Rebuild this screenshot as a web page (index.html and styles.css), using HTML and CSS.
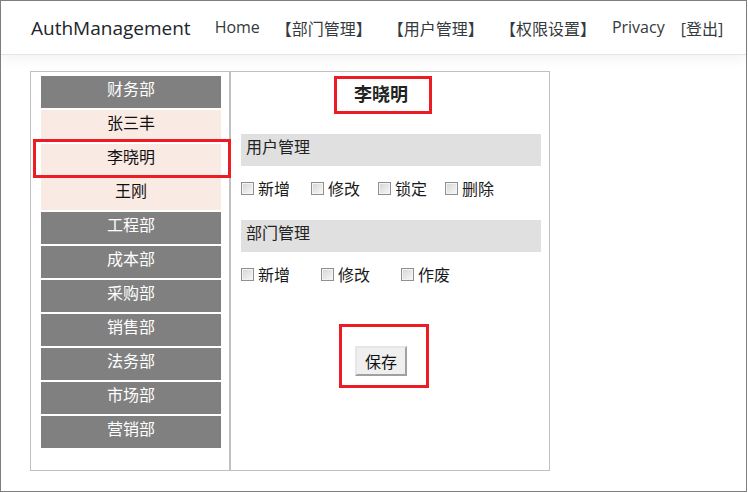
FILE: index.html
```html
<!DOCTYPE html>
<html lang="zh-CN">
<head>
    <meta charset="UTF-8">
    <title>AuthManagement</title>
    <link rel="stylesheet" href="styles.css">
</head>
<body>
<div class="frame">
    <header class="navbar">
        <a class="brand" href="#">AuthManagement</a>
        <nav class="nav-links">
            <a href="#">Home</a>
            <a href="#">【部门管理】</a>
            <a href="#">【用户管理】</a>
            <a href="#">【权限设置】</a>
            <a href="#">Privacy</a>
            <a href="#">[登出]</a>
        </nav>
    </header>

    <main class="auth-box">
        <aside class="dept-list">
            <div class="dept">财务部</div>
            <div class="user">张三丰</div>
            <div class="user active">李晓明</div>
            <div class="user">王刚</div>
            <div class="dept">工程部</div>
            <div class="dept">成本部</div>
            <div class="dept">采购部</div>
            <div class="dept">销售部</div>
            <div class="dept">法务部</div>
            <div class="dept">市场部</div>
            <div class="dept">营销部</div>
        </aside>

        <section class="perm-panel">
            <h3 class="user-title">李晓明</h3>

            <div class="perm-head">用户管理</div>
            <div class="perm-row row-user">
                <label class="first"><input type="checkbox">新增</label>
                <label><input type="checkbox">修改</label>
                <label><input type="checkbox">锁定</label>
                <label><input type="checkbox">删除</label>
            </div>

            <div class="perm-head">部门管理</div>
            <div class="perm-row row-dept">
                <label><input type="checkbox">新增</label>
                <label><input type="checkbox">修改</label>
                <label><input type="checkbox">作废</label>
            </div>

            <div class="save-wrap">
                <button type="button" id="save_btn">保存</button>
            </div>
        </section>
    </main>
</div>
</body>
</html>
```

FILE: styles.css
```css
* {
    box-sizing: border-box;
}
body {
    margin: 0;
    font-family: "Open Sans", "Noto Sans CJK SC", sans-serif;
    color: #212529;
    background: #fff;
}
.frame {
    width: 747px;
    height: 492px;
    border: 1px solid #7f7f7f;
}
.navbar {
    display: flex;
    align-items: center;
    height: 54px;
    padding-left: 30px;
    border-bottom: 1px solid #e5e5e5;
    box-shadow: 0 4px 12px rgba(0, 0, 0, 0.05);
    white-space: nowrap;
}
.brand {
    font-size: 19px;
    color: #212529;
    text-decoration: none;
    margin-right: 16px;
}
.nav-links {
    display: flex;
}
.nav-links a {
    font-size: 16px;
    padding: 0 8px;
    color: #343a40;
    text-decoration: none;
}

.auth-box {
    display: flex;
    width: 520px;
    height: 400px;
    margin: 16px 0 0 29px;
    border: 1px solid #c0c0c0;
}
.dept-list {
    width: 200px;
    padding: 4px 0 0 10px;
    border-right: 2px solid #c0c0c0;
}
.dept-list div {
    position: relative;
    width: 180px;
    height: 32px;
    margin-bottom: 2px;
    line-height: 27px;
    text-align: center;
    font-size: 16px;
}
.dept {
    background-color: #808080;
    color: #fff;
}
.user {
    background-color: #f9ebe3;
    color: #111;
}
.user.active::after {
    content: "";
    position: absolute;
    left: -8px;
    top: -5px;
    right: -10px;
    bottom: -2px;
    border: 3px solid #ed1c24;
}

.perm-panel {
    flex: 1;
    padding: 4px 8px 0 10px;
}
.user-title {
    display: inline-block;
    margin: 0 0 0 93px;
    padding: 0 21px 0 17px;
    border: 3px solid #ed1c24;
    font-size: 18px;
    line-height: 31px;
    height: 38px;
    color: #222;
}
.perm-head {
    height: 32px;
    margin-top: 20px;
    padding-left: 5px;
    line-height: 27px;
    font-size: 16px;
    background-color: #e0e0e0;
    color: #222;
}
.perm-row {
    display: flex;
    align-items: center;
    height: 24px;
    margin-top: 10px;
    font-size: 16px;
    color: #1a1a1a;
}
.perm-row label {
    display: flex;
    align-items: center;
}
.row-user {
    gap: 18px;
}
.row-user .first {
    margin-right: 3px;
}
.row-dept {
    gap: 31px;
}
.perm-row input {
    appearance: none;
    width: 13px;
    height: 13px;
    margin: 0 4px 0 0;
    border: 1px solid #8e8f8f;
    box-shadow: inset 0 0 0 1px #f4f4f4;
    background: linear-gradient(135deg, #d4d4d4, #f8f8f8);
}
.save-wrap {
    display: inline-block;
    margin: 38px 0 0 98px;
    padding: 19px 19px 9px 13px;
    border: 3px solid #ed1c24;
}
#save_btn {
    width: 52px;
    height: 30px;
    padding: 0;
    font-family: "Open Sans", "Noto Sans CJK SC", sans-serif;
    font-size: 16px;
    color: #111;
    background-color: #efefef;
    border: 2px solid;
    border-color: #e6e6e6 #a0a0a0 #a0a0a0 #e6e6e6;
}
```
